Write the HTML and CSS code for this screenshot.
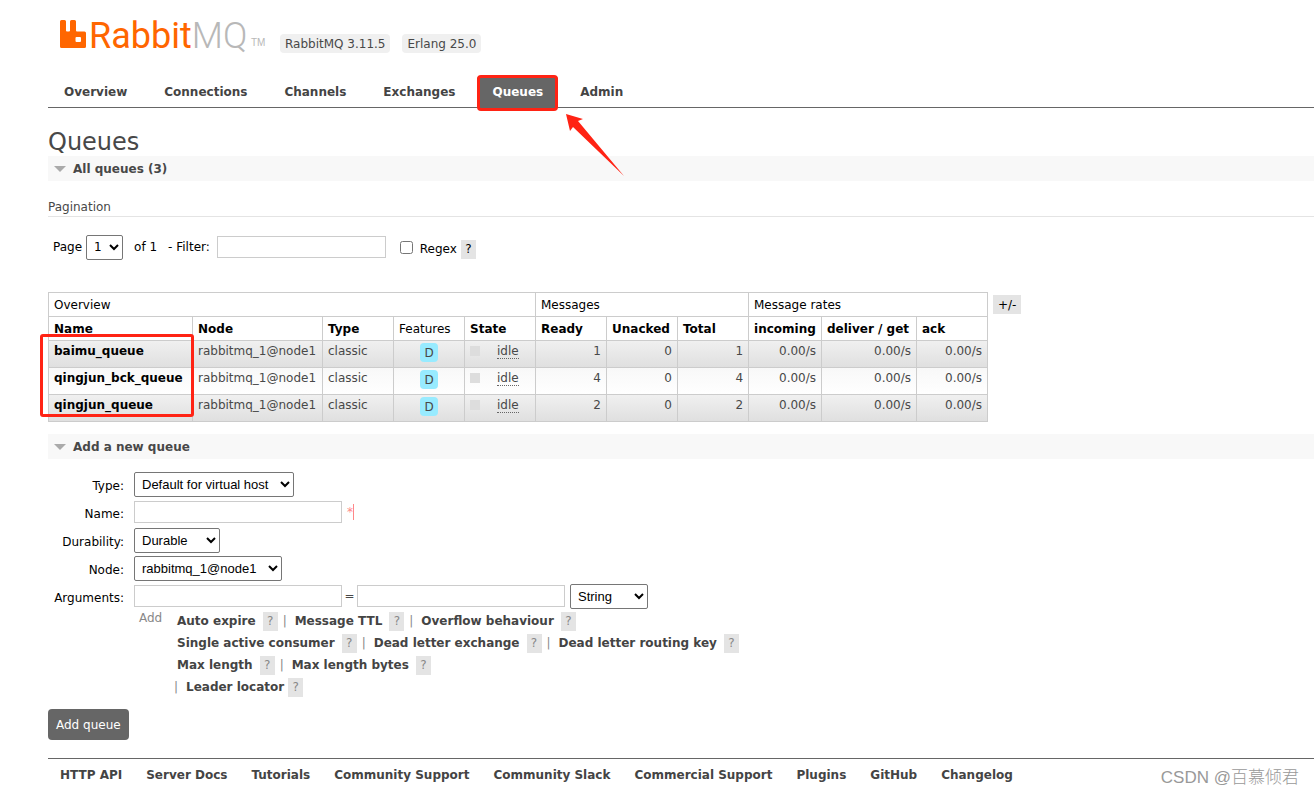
FILE: index.html
```html
<!DOCTYPE html>
<html lang="en">
<head>
<meta charset="utf-8">
<title>RabbitMQ Management</title>
<link rel="stylesheet" href="styles.css">
</head>
<body>
<header class="header">
  <div class="brand">
    <a class="logo" href="#" aria-label="RabbitMQ">
      <svg class="logo-mark" viewBox="0 0 26 28" aria-hidden="true"><path fill="#f60" fill-rule="evenodd" d="M1.500 0H4.500Q6 0 6 1.500V10.500Q6 11.500 7 11.500H9Q10 11.500 10 10.500V1.500Q10 0 11.500 0H14.500Q16 0 16 1.500V10.500Q16 11.500 17 11.500H24.500Q26 11.500 26 13V26.500Q26 28 24.500 28H1.500Q0 28 0 26.500V1.500Q0 0 1.500 0ZM16.500 17Q15.500 17 15.500 18V21Q15.500 22 16.500 22H20Q21 22 21 21V18Q21 17 20 17Z"/></svg>
      <span class="logo-text">Rabbit<span class="logo-mq">MQ</span></span><span class="logo-tm">TM</span>
    </a>
    <span class="version">RabbitMQ 3.11.5</span>
    <span class="version">Erlang 25.0</span>
  </div>
  <nav class="tabs">
    <a class="tab" href="#">Overview</a>
    <a class="tab" href="#">Connections</a>
    <a class="tab" href="#">Channels</a>
    <a class="tab" href="#">Exchanges</a>
    <a class="tab selected" href="#">Queues<svg class="arrow" viewBox="0 0 60 64" aria-hidden="true"><path fill="#ff2314" d="M0 0L17 5L12 7L58 62L7 13L4 17Z"/></svg></a>
    <a class="tab" href="#">Admin</a>
  </nav>
</header>
<main class="main">
  <h1>Queues</h1>
  <h2 class="section">All queues (3)</h2>
  <h3>Pagination</h3>
  <div class="pager">
    <label for="page">Page</label>
    <select id="page" class="page-select"><option>1</option></select>
    <span class="of">of 1</span>
    <label class="filter-label" for="filter">- Filter:</label>
    <input id="filter" class="filter" type="text">
    <input id="regex" class="check" type="checkbox">
    <label class="regex" for="regex">Regex</label>
    <button class="help dark" type="button">?</button>
  </div>
  <div class="table-row">
    <div class="table-wrap">
    <table class="list">
      <colgroup><col class="c144"><col class="c130"><col class="c71"><col class="c71"><col class="c71"><col class="c71"><col class="c71"><col class="c71"><col class="c73"><col class="c95"><col class="c71"></colgroup>
      <thead>
        <tr><th class="plain" colspan="5">Overview</th><th class="plain" colspan="3">Messages</th><th class="plain" colspan="3">Message rates</th></tr>
        <tr><th>Name</th><th>Node</th><th>Type</th><th class="plain">Features</th><th>State</th><th>Ready</th><th>Unacked</th><th>Total</th><th>incoming</th><th>deliver / get</th><th>ack</th></tr>
      </thead>
      <tbody>
        <tr><td><a href="#">baimu_queue</a></td><td>rabbitmq_1@node1</td><td>classic</td><td class="c"><span class="feature">D</span></td><td><span class="state"><i></i><abbr>idle</abbr></span></td><td class="r">1</td><td class="r">0</td><td class="r">1</td><td class="r">0.00/s</td><td class="r">0.00/s</td><td class="r">0.00/s</td></tr>
        <tr><td><a href="#">qingjun_bck_queue</a></td><td>rabbitmq_1@node1</td><td>classic</td><td class="c"><span class="feature">D</span></td><td><span class="state"><i></i><abbr>idle</abbr></span></td><td class="r">4</td><td class="r">0</td><td class="r">4</td><td class="r">0.00/s</td><td class="r">0.00/s</td><td class="r">0.00/s</td></tr>
        <tr><td><a href="#">qingjun_queue</a></td><td>rabbitmq_1@node1</td><td>classic</td><td class="c"><span class="feature">D</span></td><td><span class="state"><i></i><abbr>idle</abbr></span></td><td class="r">2</td><td class="r">0</td><td class="r">2</td><td class="r">0.00/s</td><td class="r">0.00/s</td><td class="r">0.00/s</td></tr>
      </tbody>
    </table>
    <div class="mark"></div>
    </div>
    <button class="columns" type="button">+/-</button>
  </div>
  <h2 class="section">Add a new queue</h2>
  <form class="form">
    <div class="fields">
      <label for="type">Type:</label>
      <div class="field"><select id="type" class="w160"><option>Default for virtual host</option></select></div>
      <label for="name">Name:</label>
      <div class="field"><input id="name" class="text" type="text"><span class="required">*</span></div>
      <label for="durability">Durability:</label>
      <div class="field"><select id="durability" class="w86"><option>Durable</option></select></div>
      <label for="node">Node:</label>
      <div class="field"><select id="node" class="w148"><option>rabbitmq_1@node1</option></select></div>
      <label for="arg-key">Arguments:</label>
      <div class="field"><input id="arg-key" class="text" type="text"><span class="eq">=</span><input class="text" type="text" aria-label="Argument value"><select class="w78" aria-label="Argument type"><option>String</option></select></div>
    </div>
    <div class="hints">
      <span class="add">Add</span>
      <div class="hint-lines">
        <div class="line"><a href="#">Auto expire</a><button class="help" type="button">?</button><span>|</span><a href="#">Message TTL</a><button class="help" type="button">?</button><span>|</span><a href="#">Overflow behaviour</a><button class="help" type="button">?</button></div>
        <div class="line"><a href="#">Single active consumer</a><button class="help" type="button">?</button><span>|</span><a href="#">Dead letter exchange</a><button class="help" type="button">?</button><span>|</span><a href="#">Dead letter routing key</a><button class="help" type="button">?</button></div>
        <div class="line"><a href="#">Max length</a><button class="help" type="button">?</button><span>|</span><a href="#">Max length bytes</a><button class="help" type="button">?</button></div>
        <div class="line last"><span>|</span><a href="#">Leader locator</a><button class="help" type="button">?</button></div>
      </div>
    </div>
    <button class="submit" type="button">Add queue</button>
  </form>
</main>
<footer class="footer">
  <a href="#">HTTP API</a><a href="#">Server Docs</a><a href="#">Tutorials</a><a href="#">Community Support</a><a href="#">Community Slack</a><a href="#">Commercial Support</a><a href="#">Plugins</a><a href="#">GitHub</a><a href="#">Changelog</a>
  <span class="watermark">CSDN @百慕倾君</span>
</footer>
</body>
</html>
```

FILE: styles.css
```css
* { box-sizing: border-box; }
body { margin: 0; padding-left: 48px; background: #fff; color: #484848; font: 12px/16px "DejaVu Sans", Verdana, sans-serif; overflow-x: hidden; }
a { color: #444; font-weight: bold; text-decoration: none; }
button { font: inherit; border: 0; padding: 0; }
h1, h2, h3 { margin: 0; font-weight: normal; }

.brand { display: flex; align-items: flex-end; gap: 12px; height: 53px; padding-left: 12px; }
.logo { display: flex; align-items: flex-end; width: 208px; height: 53px; padding-bottom: 5px; font-weight: normal; }
.logo-mark { width: 26px; height: 28px; margin-right: 3px; }
.logo-text { width: 157px; font: 36px/24px Roboto, sans-serif; color: #f60; }
.logo-mq { color: #b8b8b8; font-weight: 300; }
.logo-tm { margin-left: 5px; font: 10px/10px "Liberation Sans", Arial, sans-serif; color: #b8b8b8; }
.version { height: 19px; padding: 0 5px; border-radius: 4px; background: #f0f0f0; line-height: 20px; }

.tabs { display: flex; gap: 7px; height: 55px; padding-left: 1px; align-items: flex-end; border-bottom: 1px solid #666; }
.tab { position: relative; height: 31px; padding: 0 15px; line-height: 32px; }
.tab.selected { z-index: 1; border-radius: 4px 4px 0 0; background: #666; color: #fff; }
.tab.selected::after { content: ""; position: absolute; inset: -1px 0 -4px; border: 3px solid #ff2314; border-radius: 4px; }
.arrow { position: absolute; left: 89px; top: 38px; width: 60px; height: 64px; }

h1 { padding-top: 20px; font-size: 24px; line-height: 28px; }
.section { position: relative; height: 25px; padding-left: 25px; background: #f8f8f8; font-size: 12px; font-weight: bold; line-height: 26px; }
.section::before { content: ""; position: absolute; left: 6px; top: 10px; border: 6px solid transparent; border-top-color: #aaa; border-bottom: 0; }
h3 { margin-top: 17px; border-bottom: 1px solid #e4e4e4; font-size: 12px; line-height: 18px; }

select, input { margin: 0; background: #fff; color: #000; font: 13px "Liberation Sans", Arial, sans-serif; }
select { height: 25px; padding: 0 3px; border: 1px solid #767676; border-radius: 2px; }
input[type="text"] { height: 22px; border: 1px solid #ccc; }
.pager { display: flex; align-items: center; height: 24px; margin-top: 18px; padding-left: 5px; color: #000; }
.page-select { width: 37px; margin: 0 11px 0 4px; font: 12px "DejaVu Sans", Verdana, sans-serif; }
.filter-label { margin: 0 7px 0 11px; }
.filter { width: 169px; }
.check { width: 13px; height: 13px; margin: 0 7px 0 14px; }
.regex { padding-top: 4px; }
.help { width: 15px; height: 19px; background: #e4e4e4; color: #888; line-height: 19px; }
.help.dark { margin: 4px 0 0 4px; color: #000; }

.table-row { display: flex; align-items: flex-start; gap: 5px; margin: 33px 0 12px; }
.table-wrap { position: relative; width: 940px; }
.list { width: 940px; table-layout: fixed; border-collapse: collapse; }
.c144 { width: 144px; } .c130 { width: 130px; } .c71 { width: 71px; } .c73 { width: 73px; } .c95 { width: 95px; }
.list th, .list td { height: 27px; padding: 2px 5px; border: 1px solid #ccc; line-height: 16px; white-space: nowrap; text-align: left; vertical-align: top; }
.list th { height: 24px; padding: 4px 5px 3px; color: #000; }
.list .plain { font-weight: normal; }
.list tbody tr { background: linear-gradient(#f0f0f0, #dfdfdf); }
.list tbody tr:nth-child(even) { background: linear-gradient(#f8f8f8, #fff); }
.list td a { color: #000; }
.list .r { text-align: right; }
.list .c { text-align: center; }
.feature { display: inline-block; width: 18px; height: 19px; border-radius: 4px; background: #98ebff; line-height: 20px; }
.state { display: flex; align-items: center; gap: 17px; }
.state i { width: 10px; height: 10px; background: #ddd; }
.state abbr { line-height: 16px; height: 16px; border-bottom: 1px dotted #666; }
.mark { position: absolute; left: -8px; top: 42px; width: 154px; height: 83px; border: 3px solid #ff2314; border-radius: 3px; }
.columns { height: 19px; margin-top: 3px; padding: 0 5px; background: #e4e4e4; color: #000; }

.form { padding-top: 11px; }
.fields { display: grid; grid-template-columns: 76px 1fr; grid-auto-rows: 28px; column-gap: 10px; }
.fields label { padding-top: 8px; color: #000; text-align: right; }
.field { display: flex; align-items: center; }
.text { width: 208px; }
.w160 { width: 160px; } .w86 { width: 86px; } .w148 { width: 148px; } .w78 { width: 78px; margin-left: 5px; }
.required { margin-left: 5px; border-right: 1px solid #f88; color: #f88; }
.eq { width: 15px; text-align: center; }
.hints { display: flex; color: #888; }
.add { width: 38px; margin-left: 91px; }
.line { display: flex; align-items: center; height: 22px; color: #888; }
.line .help { margin: 0 5px 0 7px; }
.line span { width: 4px; margin-right: 8px; }
.last { margin-left: -3px; }
.last .help { margin-left: 4px; }
.submit { height: 31px; margin-top: 11px; padding: 0 8px; border-radius: 4px; background: #666; color: #fff; }

.footer { position: relative; display: flex; gap: 24px; margin-top: 18px; padding: 8px 12px; border-top: 1px solid #666; }
.watermark { position: absolute; right: 15px; top: 7px; color: #999; font: 300 17px/24px "Liberation Sans", "Noto Sans CJK SC", sans-serif; }
```
